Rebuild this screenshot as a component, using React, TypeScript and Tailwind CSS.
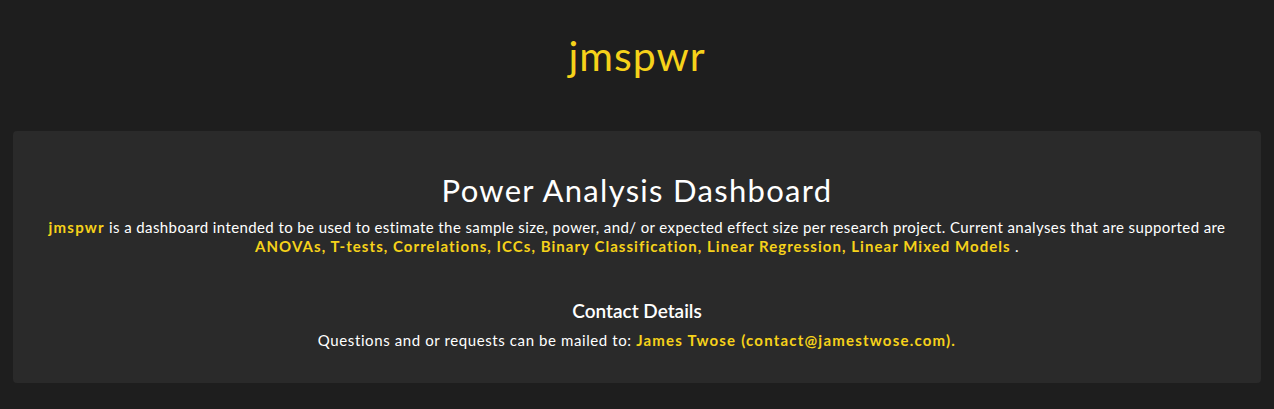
import React from "react";

const analyses = [
  "ANOVAs",
  "T-tests",
  "Correlations",
  "ICCs",
  "Binary Classification",
  "Linear Regression",
  "Linear Mixed Models",
];

export default function App() {
  return (
    <div className="min-h-[409px] bg-[#1e1e1e] text-white font-['Lato','Liberation_Sans',sans-serif]">
      {/* Header */}
      <header className="h-[131px] flex items-center justify-center">
        <h1 className="text-[41px] text-[#f6d21a] font-normal tracking-[1px] pb-[20px]">jmspwr</h1>
      </header>

      {/* Main panel */}
      <main className="mx-[13px] bg-[#2a2a2a] rounded-[4px] px-4 pt-[40px] pb-[33px] text-center">
        <h2 className="text-[31px] font-normal leading-[38px] tracking-[1.3px]">Power Analysis Dashboard</h2>
        <p className="text-[15px] leading-[19px] mt-[9px] tracking-[0.4px]">
          <span className="font-bold text-[#f6d21a] tracking-[1.2px]">jmspwr</span> is a dashboard intended to be used to
          estimate the sample size, power, and/ or expected effect size per research project. Current
          analyses that are supported are{" "}
          <br />
          <span className="font-bold text-[#f6d21a] tracking-[1.05px]">{analyses.join(", ")}</span> .
        </p>

        <h3 className="mt-[43px] text-[19px] font-semibold leading-[24px]">Contact Details</h3>
        <p className="mt-[8px] text-[15px] leading-[19px] tracking-[0.6px]">
          Questions and or requests can be mailed to:{" "}
          <span className="font-bold text-[#f6d21a] tracking-[1.2px]">James Twose (contact@jamestwose.com).</span>
        </p>
      </main>
    </div>
  );
}
